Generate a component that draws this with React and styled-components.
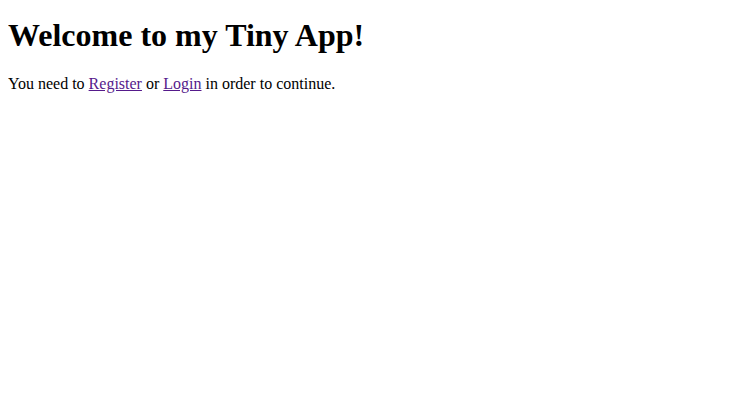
import React from 'react';
import styled, { createGlobalStyle } from 'styled-components';

const GlobalStyle = createGlobalStyle`
  body {
    margin: 8px;
    background: #fff;
    color: #000;
    font-family: "Liberation Serif", "Times New Roman", serif;
  }
`;

const Title = styled.h1`
  font-size: 32px;
  font-weight: bold;
  margin: 9px 0 21px;
`;

const Text = styled.p`
  font-size: 16px;
  margin: 16px 0;
`;

const Link = styled.a`
  color: #551a8b;
  text-decoration: underline;
`;

const App = () => (
  <>
    <GlobalStyle />
    <Title>Welcome to my Tiny App!</Title>
    <Text>
      You need to <Link href="#register">Register</Link> or <Link href="#login">Login</Link> in order to continue.
    </Text>
  </>
);

export default App;
